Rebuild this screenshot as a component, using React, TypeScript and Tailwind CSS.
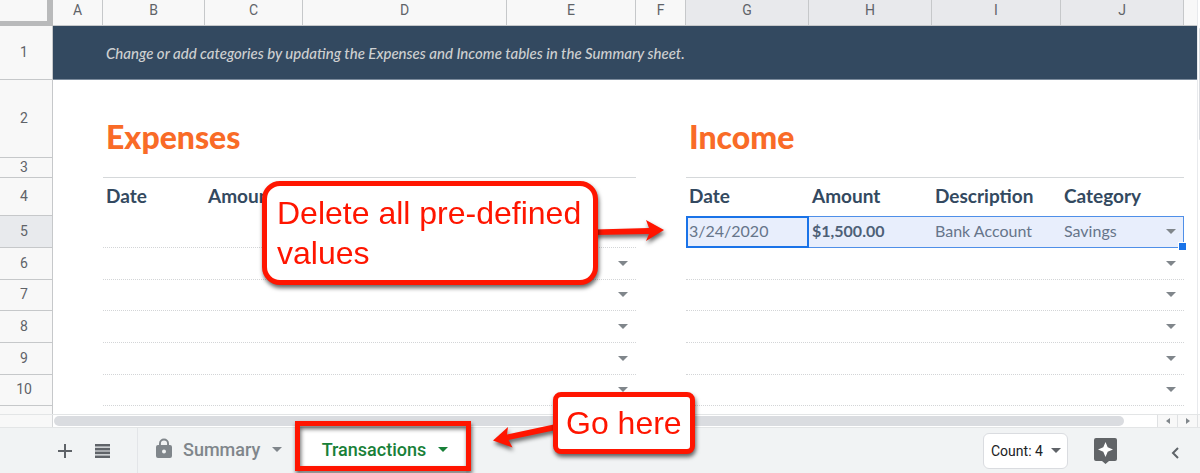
import clsx from "clsx";

type Column = { id: string; width: string; selected?: boolean };

const columns: Column[] = [
  { id: "A", width: "w-[50px]" },
  { id: "B", width: "w-[102px]" },
  { id: "C", width: "w-[98px]" },
  { id: "D", width: "w-[204px]" },
  { id: "E", width: "w-[129px]" },
  { id: "F", width: "w-[50px]" },
  { id: "G", width: "w-[123px]", selected: true },
  { id: "H", width: "w-[123px]", selected: true },
  { id: "I", width: "w-[129px]", selected: true },
  { id: "J", width: "w-[123px]", selected: true },
];

const emptyRows = [
  { id: 6, height: "h-[32px]" },
  { id: 7, height: "h-[31px]" },
  { id: 8, height: "h-[32px]" },
  { id: 9, height: "h-[32px]" },
  { id: 10, height: "h-[31px]" },
];

function Caret({ className }: { className?: string }) {
  return (
    <svg viewBox="0 0 10 5" className={clsx("h-[5px] w-[10px] fill-current", className)}>
      <path d="M0 0h10L5 5z" />
    </svg>
  );
}

function CellDropdown({ label }: { label: string }) {
  return (
    <button type="button" aria-label={label} className="block text-[#80868b]">
      <Caret />
    </button>
  );
}

function RowHeader({ id, selected }: { id: number; selected?: boolean }) {
  return (
    <th
      scope="row"
      className={clsx(
        "border-r border-b border-[#c6c8ca] pr-1 pb-[2px] text-center text-sm leading-4 font-normal text-[#5f6368]",
        selected ? "bg-[#e8eaed]" : "bg-[#f8f8f8]",
      )}
    >
      {id}
    </th>
  );
}

function SheetGrid() {
  const title = "pt-[39px] pl-[3px] text-left align-top text-[32px] leading-9 font-black text-[#f96b27]";
  const label = "pb-[3px] pl-[3px] text-left text-[19px] leading-6 font-bold text-[#334960]";
  const picked = "border-y border-[#4f8fe8] bg-[#e8eefc] pb-[2px] pl-[3px] text-base leading-5";
  const dotted = "border-b border-dotted border-[#d3d5d7]";

  return (
    <table className="w-full table-fixed border-separate border-spacing-0 bg-white font-[Lato,sans-serif]">
      <colgroup>
        <col className="w-[53px]" />
        {columns.map((column) => (
          <col key={column.id} className={column.width} />
        ))}
        <col />
      </colgroup>
      <thead className="font-[Roboto,sans-serif]">
        <tr className="h-[26px]">
          <td className="border-r-[6px] border-b-[5px] border-[#b9babb] bg-[#f8f8f8]" />
          {columns.map((column) => (
            <th
              key={column.id}
              scope="col"
              className={clsx(
                "border-r border-b border-[#c6c8ca] pb-[6px] text-sm leading-4 font-normal text-[#5f6368]",
                column.selected ? "bg-[#e8e9ec]" : "bg-[#f8f8f8]",
              )}
            >
              {column.id}
            </th>
          ))}
          <td className="border-b border-[#c6c8ca] bg-[#f8f8f8]" />
        </tr>
      </thead>
      <tbody className="[&_th]:font-[Roboto,sans-serif]">
        <tr className="h-[54px]">
          <RowHeader id={1} />
          <td className="border-b border-[#7c8b9c] bg-[#334960]" />
          <td
            colSpan={10}
            className="border-b border-[#7c8b9c] bg-[#334960] pl-[3px] text-[15px] leading-5 font-medium text-[#ced0d1] italic"
          >
            Change or add categories by updating the Expenses and Income tables in the Summary sheet.
          </td>
        </tr>
        <tr className="h-[78px]">
          <RowHeader id={2} />
          <td />
          <td colSpan={4} className={title}>
            <h2>Expenses</h2>
          </td>
          <td />
          <td colSpan={4} className={title}>
            <h2>Income</h2>
          </td>
          <td />
        </tr>
        <tr className="h-[20px]">
          <RowHeader id={3} />
          <td />
          <td colSpan={4} className="border-b border-[#d5d8da]" />
          <td />
          <td colSpan={4} className="border-b border-[#d5d8da]" />
          <td />
        </tr>
        <tr className="h-[38px]">
          <RowHeader id={4} />
          <td />
          <td className={label}>Date</td>
          <td className={label}>Amount</td>
          <td colSpan={3} />
          <td className={label}>Date</td>
          <td className={label}>Amount</td>
          <td className={label}>Description</td>
          <td className={label}>Category</td>
          <td />
        </tr>
        <tr className="h-[32px]">
          <RowHeader id={5} selected />
          <td />
          <td colSpan={4} className={dotted} />
          <td />
          <td className="bg-[#e8eefc] pb-[2px] pl-[3px] text-base leading-5 text-[#66758a] outline-2 -outline-offset-2 outline-[#1a73e8]">
            3/24/2020
          </td>
          <td className={clsx(picked, "font-bold text-[#4d6077]")}>$1,500.00</td>
          <td className={clsx(picked, "text-[#66758a]")}>Bank Account</td>
          <td className={clsx(picked, "relative border-r pr-[7px] text-[#66758a]")}>
            <div className="flex items-center justify-between">
              Savings
              <CellDropdown label="Category for row 5" />
            </div>
            <span className="absolute -right-1 -bottom-1 size-[9px] border border-white bg-[#1a73e8]" />
          </td>
          <td />
        </tr>
        {emptyRows.map((row) => (
          <tr key={row.id} className={row.height}>
            <RowHeader id={row.id} />
            <td />
            <td colSpan={4} className={clsx(dotted, "pr-2 pb-px")}>
              <div className="flex justify-end">
                <CellDropdown label={`Expense category for row ${row.id}`} />
              </div>
            </td>
            <td />
            <td colSpan={4} className={clsx(dotted, "pr-2 pb-px")}>
              <div className="flex justify-end">
                <CellDropdown label={`Income category for row ${row.id}`} />
              </div>
            </td>
            <td />
          </tr>
        ))}
        <tr className="h-[8px]">
          <td className="border-r border-[#c6c8ca] bg-[#f8f8f8]" />
          <td colSpan={11} />
        </tr>
      </tbody>
    </table>
  );
}

function HorizontalScroll() {
  const step = "flex h-full w-5 items-center justify-center border-l border-[#dfe1e3] bg-[#f8f8f8] text-[#80868b]";

  return (
    <div className="flex h-[14px] border-y border-[#e3e5e6] bg-white">
      <div className="w-[53px] border-r border-[#d5d7d9] bg-[#f8f8f8]" />
      <div className="flex-1 py-px pl-px">
        <div className="h-full w-[97%] rounded-full bg-[#dadce0]" />
      </div>
      <button type="button" aria-label="Scroll left" className={step}>
        <svg viewBox="0 0 4 6" className="h-[6px] w-[4px] fill-current">
          <path d="M4 0v6L0 3z" />
        </svg>
      </button>
      <button type="button" aria-label="Scroll right" className={step}>
        <svg viewBox="0 0 4 6" className="h-[6px] w-[4px] fill-current">
          <path d="M0 0v6l4-3z" />
        </svg>
      </button>
      <div className="w-[3px] border-l border-[#dfe1e3] bg-[#f8f8f8]" />
    </div>
  );
}

function BottomBar() {
  return (
    <footer className="flex h-[45px] items-stretch bg-[#f1f3f4] text-[#5f6368]">
      <div className="flex w-[138px] items-center gap-[23px] border-r border-[#e3e5e8] pl-[58px]">
        <button type="button" aria-label="Add sheet">
          <svg viewBox="0 0 14 14" className="size-[14px] fill-none stroke-current stroke-2">
            <path d="M7 0v14M0 7h14" />
          </svg>
        </button>
        <button type="button" aria-label="All sheets">
          <svg viewBox="0 0 15 14" className="h-[14px] w-[15px] fill-none stroke-current" strokeWidth="2.6">
            <path d="M0 1.300h15M0 5.100h15M0 8.900h15M0 12.700h15" />
          </svg>
        </button>
      </div>

      <nav className="flex text-lg leading-6 font-medium">
        <button type="button" className="flex w-[162px] items-center pb-[2px] pl-[18px] text-[#80868b]">
          <svg viewBox="0 0 16 20" className="mr-[11px] mb-1 h-[20px] w-[16px]">
            <path
              fill="currentColor"
              fillRule="evenodd"
              d="M14 7h-1V5.500a5 5 0 0 0-10 0V7H2a2 2 0 0 0-2 2v9a2 2 0 0 0 2 2h12a2 2 0 0 0 2-2V9a2 2 0 0 0-2-2zM4.900 5.500a3.100 3.100 0 0 1 6.200 0V7H4.900zM8 15.500a2 2 0 1 1 0-4 2 2 0 0 1 0 4z"
            />
          </svg>
          Summary
          <Caret className="ml-3" />
        </button>
        <button
          type="button"
          className="relative flex w-[166px] items-center justify-center bg-white pb-[2px] pl-1 text-[#188038]"
        >
          Transactions
          <Caret className="ml-3" />
          <span className="absolute -inset-x-[5px] -top-[7px] bottom-[2px] border-[5px] border-[#ff1500] drop-shadow-[1px_3px_2px_rgba(0,0,0,0.6)]" />
        </button>
      </nav>

      <div className="ml-auto flex items-center pr-[21px]">
        <div className="relative mr-[26px]">
          <select
            aria-label="Selection summary"
            className="block h-[36px] w-[85px] appearance-none rounded-md border border-[#dadce0] bg-white pl-[7px] text-sm text-[#202124]"
          >
            <option>Count: 4</option>
          </select>
          <Caret className="pointer-events-none absolute top-[15px] right-[7px]" />
        </div>
        <button type="button" aria-label="Explore" className="mr-[54px]">
          <svg viewBox="0 0 23 26" className="h-[26px] w-[23px]">
            <path
              fill="#616467"
              d="M2 0h19a2 2 0 0 1 2 2v19a2 2 0 0 1-2 2h-6l-3.500 3L8 23H2a2 2 0 0 1-2-2V2a2 2 0 0 1 2-2z"
            />
            <path fill="#fff" d="M11.500 4l2.200 5.300 5.300 2.200-5.300 2.200-2.200 5.300-2.200-5.300L4 11.500l5.300-2.200z" />
          </svg>
        </button>
        <button type="button" aria-label="Show side panel" className="pt-1">
          <svg viewBox="0 0 8 12" className="h-[12px] w-[8px] fill-none stroke-current stroke-2">
            <path d="M7 1L2 6l5 5" />
          </svg>
        </button>
      </div>
    </footer>
  );
}

function Annotations() {
  const note =
    "absolute border-[5px] border-[#ff1500] bg-white font-['Liberation_Sans',sans-serif] text-[32px] leading-10 text-[#ff1500] drop-shadow-[1px_3px_2px_rgba(0,0,0,0.6)]";
  const arrow = "absolute fill-[#ff1500] drop-shadow-[1px_3px_2px_rgba(0,0,0,0.6)]";

  return (
    <>
      <svg viewBox="0 0 70 24" className={clsx(arrow, "top-[219px] left-[595px] h-[24px] w-[70px]")}>
        <path d="M0 10.500L54 9 51 1l18 10-18 11 3-7L0 16z" />
      </svg>
      <p className={clsx(note, "top-[181px] left-[262px] w-[336px] rounded-[18px] px-[10px] py-[7px]")}>
        Delete all pre-defined values
      </p>
      <svg viewBox="0 0 66 26" className={clsx(arrow, "top-[424px] left-[492px] h-[26px] w-[66px]")}>
        <path d="M1 16.500L16 3l-1 7.500L64 0v6L16.500 16l4 7.500z" />
      </svg>
      <p className={clsx(note, "top-[392px] left-[553px] rounded-lg px-2 py-[6px]")}>Go here</p>
    </>
  );
}

export default function App() {
  return (
    <div className="relative w-full overflow-hidden bg-[#f1f3f4] font-[Roboto,sans-serif]">
      <div className="flex">
        <div className="min-w-0 flex-1">
          <SheetGrid />
        </div>
        <div className="w-[3px] border-l border-[#e8eaed] bg-white pt-7 pl-px">
          <div className="h-28 rounded-l-full bg-[#dadce0]" />
        </div>
      </div>
      <HorizontalScroll />
      <BottomBar />
      <Annotations />
    </div>
  );
}
